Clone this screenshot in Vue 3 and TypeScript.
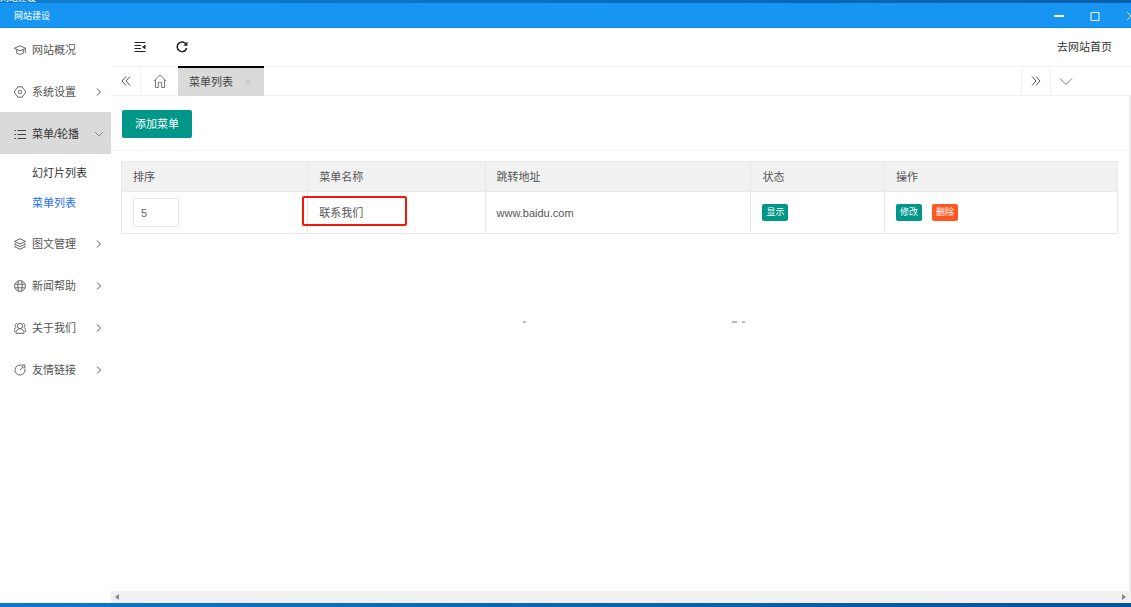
<script setup lang="ts">
import { ref } from 'vue'

interface MenuItem {
  label: string
  icon: string
  arrow?: boolean
  children?: string[]
}

interface Row {
  id: number
  sort: string
  name: string
  url: string
}

const menu: MenuItem[] = [
  { label: '网站概况', icon: 'cap' },
  { label: '系统设置', icon: 'gear', arrow: true },
  { label: '菜单/轮播', icon: 'list', arrow: true, children: ['幻灯片列表', '菜单列表'] },
  { label: '图文管理', icon: 'layers', arrow: true },
  { label: '新闻帮助', icon: 'globe', arrow: true },
  { label: '关于我们', icon: 'people', arrow: true },
  { label: '友情链接', icon: 'link', arrow: true },
]

const opened = ref('菜单/轮播')
const current = ref('菜单列表')
const rows = ref<Row[]>([{ id: 1, sort: '5', name: '联系我们', url: 'www.baidu.com' }])

function toggle(item: MenuItem) {
  opened.value = opened.value === item.label ? '' : item.label
}
</script>

<template>
  <div class="window">
    <div class="backstrip"><span>网站建设</span></div>
    <header class="titlebar">
      <span class="title">网站建设</span>
      <div class="winbtns">
        <button type="button" aria-label="最小化">
          <svg width="12" height="12" viewBox="0 0 12 12"><path d="M1 6h10" stroke-width="2" /></svg>
        </button>
        <button type="button" aria-label="最大化">
          <svg width="12" height="12" viewBox="0 0 12 12"><path d="M2 2.500h8v8h-8z" /></svg>
        </button>
        <button type="button" aria-label="关闭">
          <svg width="12" height="12" viewBox="0 0 12 12"><path d="M2 2l8 8M10 2l-8 8" /></svg>
        </button>
      </div>
    </header>

    <div class="shell">
      <nav class="side">
        <div v-for="item in menu" :key="item.label">
          <button
            type="button"
            class="item"
            :class="{ open: item.children && opened === item.label }"
            @click="toggle(item)"
          >
            <svg class="icon" width="12" height="12" viewBox="0 0 12 12">
              <template v-if="item.icon === 'cap'">
                <path d="M.3 4.300L6 1.800l5.700 2.500L6 6.800z" />
                <path d="M2.700 5.800v3.500c1.900 1.300 4.700 1.300 6.600 0V5.800M11.300 4.800V9" />
              </template>
              <template v-else-if="item.icon === 'gear'">
                <path d="M3.600.8h4.800l.5 1.700 1.300.7L11.700 6l-1.500 2.800-1.300.7-.5 1.700H3.600l-.5-1.700-1.300-.7L.3 6l1.500-2.800 1.300-.7z" />
                <circle cx="6" cy="6" r="1.800" />
              </template>
              <template v-else-if="item.icon === 'list'">
                <path d="M3.500 2.500H12M3.500 6.500H12M3.500 10.500H12" />
                <path d="M.5 2.500H2M.5 6.500H2M.5 10.500H2" />
              </template>
              <template v-else-if="item.icon === 'layers'">
                <path d="M6 .8l5.600 2.600L6 6 .4 3.400z" />
                <path d="M1.600 5.300L.4 6 6 8.600 11.600 6l-1.200-.7M1.600 7.900l-1.200.7L6 11.200l5.600-2.600-1.200-.7" />
              </template>
              <template v-else-if="item.icon === 'globe'">
                <circle cx="6" cy="6" r="5.400" />
                <path d="M4.500 1C3.600 4 3.600 8 4.500 11M7.500 1c.9 3 .9 7 0 10M1.200 4.200h9.600M1.200 7.800h9.600" />
              </template>
              <template v-else-if="item.icon === 'people'">
                <circle cx="6" cy="4" r="2.600" />
                <path d="M1.900 11.300C2 8.300 3.600 6.700 6 6.700s4 1.600 4.100 4.600zM3.300 1.500C.9 1.300.5 4.500 2.200 5.400.8 6 .1 7.300 0 9.200h1.600M8.700 1.500c2.400-.2 2.800 3 1.100 3.900 1.400.6 2.100 1.900 2.200 3.800h-1.600" />
              </template>
              <template v-else>
                <path d="M7.300 1.200A5 5 0 1 0 10.900 5" />
                <path d="M6 6l3.200-3.300M8 1.200l2.600-.4.500 2.800-1.500.6L8 2.600z" />
              </template>
            </svg>
            <span>{{ item.label }}</span>
            <svg
              v-if="item.children && opened === item.label"
              class="arrow"
              width="10"
              height="10"
              viewBox="0 0 10 10"
            >
              <path d="M1 3l4 4 4-4" />
            </svg>
            <svg v-else-if="item.arrow" class="arrow dark" width="10" height="10" viewBox="0 0 10 10">
              <path d="M3 1.500L6.500 5 3 8.500" />
            </svg>
          </button>
          <div v-if="item.children && opened === item.label" class="sub">
            <a
              v-for="child in item.children"
              :key="child"
              href="#"
              :class="{ active: child === current }"
              @click.prevent="current = child"
              >{{ child }}</a
            >
          </div>
        </div>
      </nav>

      <main class="main">
        <div class="toolbar">
          <button type="button" aria-label="收起菜单">
            <svg width="12" height="12" viewBox="0 0 12 12">
              <path d="M.5 1.500h11M.5 4.500h6.500M.5 7.500h6.500M.5 10.500h11" />
              <path class="fill" d="M11.500 3.500v5L8 6z" />
            </svg>
          </button>
          <button type="button" aria-label="刷新">
            <svg width="12" height="12" viewBox="0 0 12 12">
              <path d="M10.300 3.600A4.800 4.800 0 1 0 10.700 7" stroke-width="1.500" />
              <path class="fill" d="M11.500.6v4.200H7.300z" />
            </svg>
          </button>
          <a class="home-link" href="#">去网站首页</a>
        </div>

        <div class="tabs">
          <button type="button" class="tabbtn prev" aria-label="向左">
            <svg width="12" height="12" viewBox="0 0 12 12"><path d="M6 1.500L2 6l4 4.500M10 1.500L6 6l4 4.500" /></svg>
          </button>
          <button type="button" class="tabbtn homebtn" aria-label="主页">
            <svg width="14" height="14" viewBox="0 0 14 14">
              <path d="M.5 7.300L7 .8l6.500 6.500M2.500 5.600v7.900h2.800V8.300h3.400v5.200h2.800V5.600" />
            </svg>
          </button>
          <div class="tab">
            <span>菜单列表</span>
            <button type="button" aria-label="关闭标签">
              <svg width="8" height="8" viewBox="0 0 8 8"><path d="M1 1l6 6M7 1L1 7" /></svg>
            </button>
          </div>
          <button type="button" class="tabbtn next" aria-label="向右">
            <svg width="12" height="12" viewBox="0 0 12 12"><path d="M2 1.500L6 6l-4 4.500M6 1.500L10 6l-4 4.500" /></svg>
          </button>
          <button type="button" class="tabbtn more" aria-label="更多">
            <svg width="14" height="12" viewBox="0 0 14 12"><path d="M1 3.500l6 6 6-6" /></svg>
          </button>
        </div>

        <section class="content">
          <div class="actions"><button type="button" class="add">添加菜单</button></div>
          <table>
            <colgroup>
              <col class="c1" />
              <col class="c2" />
              <col class="c3" />
              <col class="c4" />
              <col />
            </colgroup>
            <thead>
              <tr>
                <th>排序</th>
                <th>菜单名称</th>
                <th>跳转地址</th>
                <th>状态</th>
                <th>操作</th>
              </tr>
            </thead>
            <tbody>
              <tr v-for="row in rows" :key="row.id">
                <td><input v-model="row.sort" type="text" aria-label="排序" /></td>
                <td class="marked">{{ row.name }}</td>
                <td>{{ row.url }}</td>
                <td><button type="button" class="tag">显示</button></td>
                <td>
                  <div class="ops">
                    <button type="button" class="tag">修改</button>
                    <button type="button" class="tag danger">删除</button>
                  </div>
                </td>
              </tr>
            </tbody>
          </table>
          <div class="specks"><i></i><i class="wide"></i><i></i></div>
        </section>

        <div class="hscroll">
          <svg width="4" height="6" viewBox="0 0 4 6"><path d="M4 0v6L0 3z" /></svg>
          <svg width="4" height="6" viewBox="0 0 4 6"><path d="M0 0v6l4-3z" /></svg>
        </div>
      </main>
    </div>
    <div class="bottomstrip"></div>
  </div>
</template>

<style>
body {
  margin: 0;
  background: #fff;
}
</style>

<style scoped>
.window {
  display: flex;
  flex-direction: column;
  height: 100vh;
  overflow: hidden;
  background: #fff;
  color: #555;
  font: 11px/16px 'Liberation Sans', 'Noto Sans CJK SC', sans-serif;
}
.window * {
  box-sizing: border-box;
}
button {
  margin: 0;
  padding: 0;
  border: 0;
  background: none;
  color: inherit;
  font: inherit;
  cursor: pointer;
}
a {
  color: inherit;
  text-decoration: none;
}
svg {
  display: block;
  flex: none;
  fill: none;
  stroke: currentColor;
}
svg .fill {
  fill: currentColor;
  stroke: none;
}

.backstrip {
  display: flex;
  align-items: flex-end;
  flex: none;
  height: 3px;
  overflow: hidden;
  background: linear-gradient(90deg, #107dcc, #0a5fad);
  color: #fff;
  font-size: 9px;
  line-height: 10px;
}
.titlebar {
  display: flex;
  align-items: center;
  justify-content: space-between;
  flex: none;
  height: 25px;
  padding-left: 14px;
  overflow: hidden;
  border-bottom: 1px solid #0a87e8;
  background: #1695f3;
  color: #fff;
}
.title {
  padding-top: 2px;
  font-size: 9px;
}
.winbtns {
  display: flex;
  gap: 24px;
  margin: 2px -6px 0 0;
}

.shell {
  display: flex;
  flex: 1;
  min-height: 0;
}
.side {
  flex: none;
  width: 111px;
}
.item {
  display: flex;
  align-items: center;
  width: 100%;
  height: 42px;
  padding: 1px 7px 0 14px;
  text-align: left;
}
.item.open {
  background: #dadada;
  color: #333;
}
.icon {
  margin-right: 6px;
  color: #666;
}
.open .icon {
  color: #444;
}
.arrow {
  margin-left: auto;
  color: #888;
}
.arrow.dark {
  color: #555;
}
.sub {
  padding: 4px 0;
}
.sub a {
  display: block;
  padding-left: 32px;
  color: #333;
  line-height: 30px;
}
.sub a.active {
  color: #1a6dff;
}

.main {
  display: flex;
  flex: 1;
  flex-direction: column;
  min-width: 0;
}
.toolbar {
  display: flex;
  align-items: center;
  flex: none;
  gap: 30px;
  height: 38px;
  padding: 0 19px 0 23px;
  color: #222;
}
.home-link {
  margin-left: auto;
  color: #333;
}
.tabs {
  display: flex;
  flex: none;
  height: 30px;
  box-shadow: inset 0 1px #f4f4f4, inset 0 -1px #f2f2f2;
}
.tabbtn {
  display: flex;
  align-items: center;
  justify-content: center;
  width: 30px;
  border-right: 1px solid #f2f2f2;
}
.homebtn {
  width: 37px;
  border: 0;
  color: #777;
}
.next {
  margin-left: auto;
  border-left: 1px solid #f2f2f2;
}
.more {
  width: 30px;
  margin-right: 50px;
  border: 0;
  color: #777;
}
.tab {
  display: flex;
  align-items: center;
  gap: 11px;
  padding: 0 12px 0 11px;
  border-top: 2px solid #000;
  background: #dadada;
  color: #444;
  line-height: 28px;
}
.tab button {
  color: #bbb;
}

.content {
  position: relative;
  flex: 1;
  min-height: 0;
  border-right: 2px solid #eee;
}
.actions {
  height: 55px;
  padding: 14px 11px 0;
  border-bottom: 1px solid #f4f4f4;
}
.add {
  display: block;
  height: 28px;
  padding: 0 13px;
  border-radius: 2px;
  background: #009688;
  color: #fff;
}
table {
  width: calc(100% - 21px);
  margin: 10px 11px 0 10px;
  border-collapse: collapse;
  table-layout: fixed;
}
.c1 {
  width: 18.7%;
}
.c2 {
  width: 17.8%;
}
.c3 {
  width: 26.7%;
}
.c4 {
  width: 13.4%;
}
th,
td {
  height: 30px;
  padding: 0 11px;
  border: 1px solid #e8e8e8;
  font-weight: 400;
  text-align: left;
}
th {
  background: #f1f1f1;
}
td {
  height: 42px;
}
td input {
  display: block;
  width: 46px;
  height: 29px;
  padding: 0 7px;
  border: 1px solid #e6e6e6;
  border-radius: 2px;
  outline: 0;
  background: #fff;
  color: #666;
  font: inherit;
}
.marked {
  position: relative;
}
.marked::after {
  position: absolute;
  top: 4px;
  left: -6px;
  box-sizing: border-box;
  width: 105px;
  height: 30px;
  border: 2px solid #f5160c;
  border-radius: 2px;
  content: '';
}
.ops {
  display: flex;
  gap: 10px;
}
.tag {
  display: block;
  height: 17px;
  padding: 0 4px;
  border-radius: 2px;
  background: #009688;
  color: #fff;
  font-size: 9px;
  line-height: 17px;
}
.danger {
  background: #ff5722;
}
.specks {
  position: absolute;
  top: 225px;
  left: 412px;
  display: flex;
  width: 222px;
}
.specks i {
  width: 3px;
  height: 2px;
  background: #bbb;
}
.specks .wide {
  width: 5px;
  margin: 0 5px 0 auto;
}

.hscroll {
  display: flex;
  align-items: center;
  justify-content: space-between;
  flex: none;
  height: 12px;
  padding: 0 5px 0 4px;
  background: #f0f0f0;
}
.hscroll path {
  fill: #888;
  stroke: none;
}
.bottomstrip {
  flex: none;
  height: 4px;
  background: linear-gradient(90deg, #0b78cc, #0650a0);
}
</style>
